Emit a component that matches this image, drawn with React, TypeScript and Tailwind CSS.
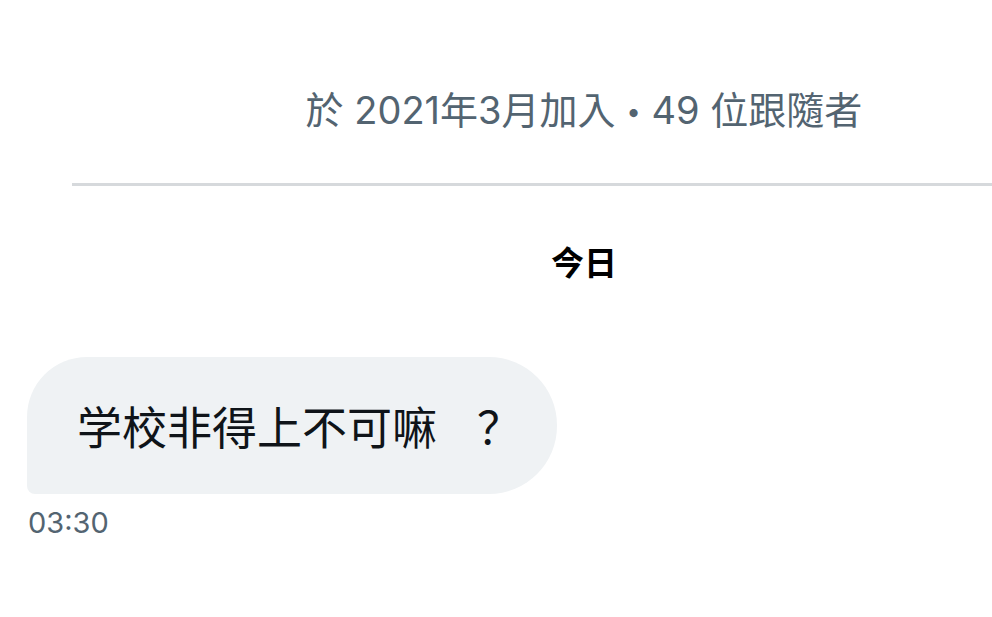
export default function App() {
  return (
    <div
      className="w-[992px] h-[617px] overflow-hidden bg-white"
      style={{ fontFamily: 'Inter, "Noto Sans CJK TC", sans-serif' }}
    >
      <div className="w-[1168px] flex flex-col">
        <div className="pt-[88px] text-center text-[38px] leading-[45px] text-[#536471]">
          於 2021年3月加入 <span className="text-[26px] align-[3px]">•</span> 49 位跟隨者
        </div>

        <div className="ml-[72px] mt-[49px] h-[3px] bg-[#d6d9dc]" />

        <div className="mt-[57px] text-center text-[33px] leading-[40px] font-bold text-black">
          今日
        </div>

        <div className="mt-[74px] pl-[27px] flex">
          <div className="h-[137px] flex items-center pl-[50px] pr-[35px] bg-[#eff2f4] rounded-tl-[60px] rounded-r-[68px] rounded-bl-[8px]">
            <span className="text-[45px] leading-none text-[#0f1419]" style={{ fontFamily: '"Noto Sans CJK SC", sans-serif' }}>
              学校非得上不可嘛<span className="ml-[40px]">？</span>
            </span>
          </div>
        </div>

        <div className="mt-[12px] pl-[28px] text-[29px] leading-[34px] text-[#536471]">
          03:30
        </div>
      </div>
    </div>
  );
}
